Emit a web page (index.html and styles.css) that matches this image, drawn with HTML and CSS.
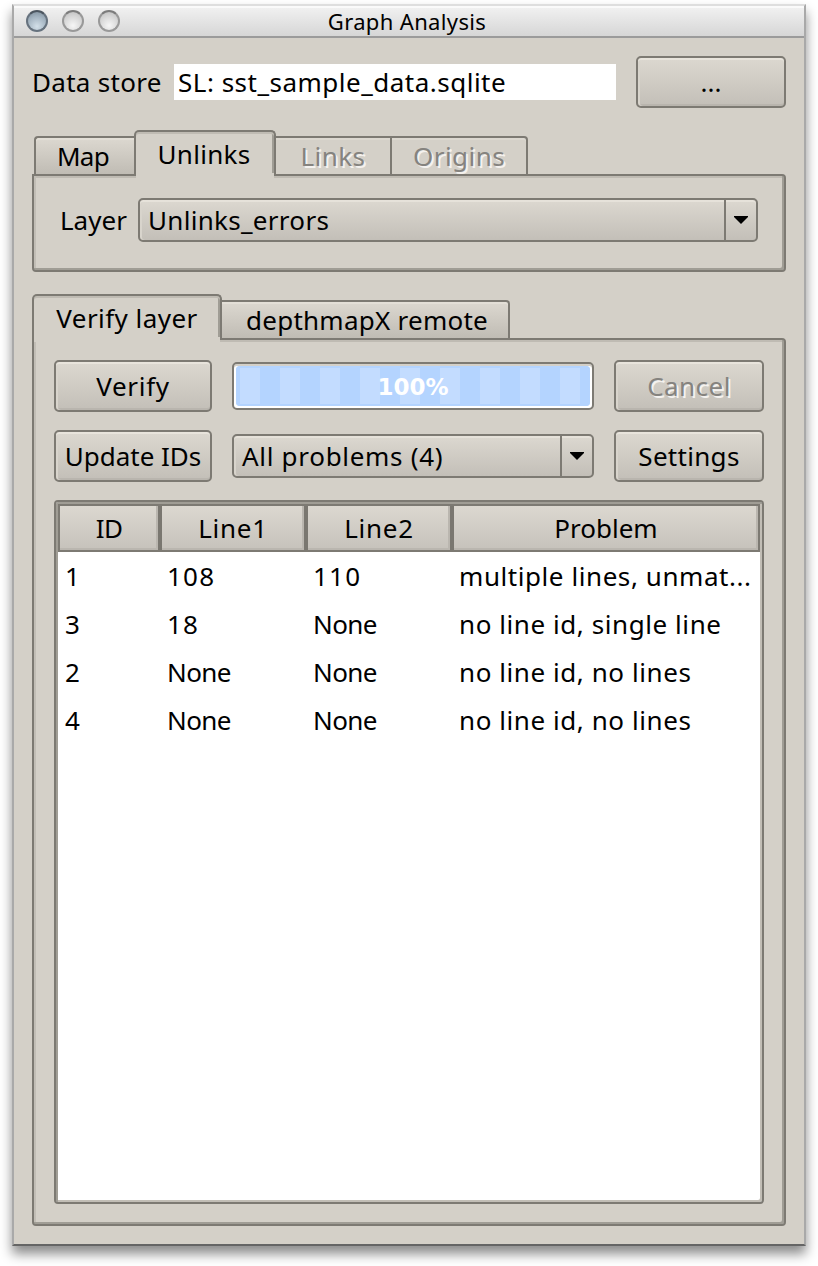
FILE: index.html
```html
<!DOCTYPE html>
<html lang="en">
<head>
<meta charset="utf-8">
<title>Graph Analysis</title>
<link rel="stylesheet" href="styles.css">
</head>
<body>
<main class="window">
  <header class="titlebar">
    <div class="lights"><i class="light light-close"></i><i class="light"></i><i class="light"></i></div>
    <h1 class="title">Graph Analysis</h1>
  </header>
  <div class="content">
    <div class="store-row">
      <label class="store-label t-store">Data store</label>
      <div class="store-field t-file">SL: sst_sample_data.sqlite</div>
      <button class="btn btn-side t-dots">...</button>
    </div>

    <nav class="tabs tabs-layers">
      <div class="tab tab-map"><span class="t-map">Map</span></div>
      <div class="tab tab-unlinks selected"><span class="t-unlinks">Unlinks</span></div>
      <div class="tab tab-links disabled"><span class="t-links">Links</span></div>
      <div class="tab tab-origins disabled last"><span class="t-origins">Origins</span></div>
    </nav>
    <section class="panel panel-layer">
      <label class="layer-label t-layer">Layer</label>
      <div class="combo combo-layer"><span class="combo-text t-errors">Unlinks_errors</span><span class="combo-arrow"><svg width="14" height="8" viewBox="0 0 14 8"><path d="M0 0H14V1L7 8L0 1Z"/></svg></span></div>
    </section>

    <nav class="tabs tabs-tools">
      <div class="tab tab-verify selected"><span class="t-vlayer">Verify layer</span></div>
      <div class="tab tab-remote last"><span class="t-remote">depthmapX remote</span></div>
    </nav>
    <section class="panel panel-tools">
      <div class="tool-grid">
        <button class="btn"><span class="t-verify">Verify</span></button>
        <div class="progress"><div class="progress-fill"><span class="t-pct">100%</span></div></div>
        <button class="btn disabled"><span class="t-cancel">Cancel</span></button>
        <button class="btn"><span class="t-update">Update IDs</span></button>
        <div class="combo"><span class="combo-text t-all">All problems (4)</span><span class="combo-arrow"><svg width="14" height="8" viewBox="0 0 14 8"><path d="M0 0H14V1L7 8L0 1Z"/></svg></span></div>
        <button class="btn"><span class="t-settings">Settings</span></button>
      </div>
      <div class="table">
        <div class="row head"><span class="t-id">ID</span><span class="t-line">Line1</span><span class="t-line">Line2</span><span class="t-problem">Problem</span></div>
        <div class="row"><span>1</span><span class="t-num">108</span><span class="t-num">110</span><span class="t-multi">multiple lines, unmat...</span></div>
        <div class="row"><span>3</span><span class="t-num">18</span><span class="t-none">None</span><span class="t-single">no line id, single line</span></div>
        <div class="row"><span>2</span><span class="t-none">None</span><span class="t-none">None</span><span class="t-nolines">no line id, no lines</span></div>
        <div class="row"><span>4</span><span class="t-none">None</span><span class="t-none">None</span><span class="t-nolines">no line id, no lines</span></div>
      </div>
    </section>
  </div>
</main>
</body>
</html>
```
FILE: styles.css
```css
* { box-sizing: border-box; }
body {
  margin: 0;
  height: 1266px;
  padding: 4px 12px 0;
  background: #fff;
  overflow: hidden;
  color: #000;
  font: 26px/32px "Noto Sans", "Open Sans", sans-serif;
}
span, label { white-space: pre; }
.window {
  width: 794px;
  height: 1242px;
  border: 2px solid #a9a9a9;
  border-top-color: #dedede;
  border-bottom-color: #656565;
  background: #d4d0c8;
  box-shadow: 0 8px 11px rgba(0, 0, 0, .45);
}
.titlebar {
  position: relative;
  display: flex;
  align-items: center;
  justify-content: center;
  height: 32px;
  border-top: 2px solid #fafafa;
  border-bottom: 2px solid #9b9b9b;
  background: linear-gradient(#f0f0f0, #d6d6d6);
}
.title { margin: -2px 0 0 -4px; font-size: 22px; font-weight: 400; line-height: 28px; letter-spacing: .35px; }
.lights { position: absolute; left: 12px; top: 2px; display: flex; gap: 14px; }
.light {
  width: 22px;
  height: 22px;
  border: 2px solid #999;
  border-top-color: #7c7c7c;
  border-radius: 50%;
  background: radial-gradient(circle at 50% 75%, #f6f6f6, #d8d8d8 55%, #bcbcbc);
}
.light-close {
  border-color: #66727e;
  border-top-color: #4c5660;
  background: radial-gradient(circle at 50% 80%, #d3e0e9, #a5b5c2 55%, #7c8c9a);
}
.content { padding: 18px 18px 0; }
.store-row { display: flex; align-items: center; height: 52px; }
.store-label { width: 142px; }
.store-field { width: 442px; height: 36px; padding-left: 4px; line-height: 36px; background: #fff; margin-right: 20px; }
.btn {
  height: 52px;
  padding: 0;
  border: 2px solid #7d7a73;
  border-radius: 5px;
  background: linear-gradient(#dcd8d0, #c3bfb8);
  box-shadow: inset 0 2px #e8e4dc, inset 2px 0 #d8d4cc, inset 0 -2px #b9b5ae;
  font: inherit;
  color: inherit;
}
.btn-side { width: 150px; }
.btn.disabled, .disabled { color: #85837f; text-shadow: 2px 2px #f4f2ef; }

.tabs { position: relative; z-index: 1; display: flex; align-items: flex-end; height: 46px; }
.tab {
  height: 40px;
  border: 2px solid #7d7a73;
  border-right: 0;
  background: linear-gradient(#dcd8d0, #c0bcb4);
  box-shadow: inset 0 2px #e3dfd7;
  text-align: center;
  line-height: 36px;
}
.tab.disabled { background: #d4d0c8; box-shadow: inset 0 2px #dcd8d0; }
.tab.last { border-right: 2px solid #7d7a73; border-top-right-radius: 4px; }
.tab.selected {
  position: relative;
  height: 46px;
  border-right: 2px solid #7d7a73;
  border-bottom: 0;
  border-radius: 5px 5px 0 0;
  background: #d4d0c8;
  box-shadow: inset 0 2px #bfbbb3, inset -2px 0 #a09d95;
  line-height: 44px;
}
.tab.selected::after {
  content: "";
  position: absolute;
  left: 0;
  right: 0;
  bottom: -2px;
  height: 5px;
  background: #d4d0c8;
}
.tabs-layers { margin-top: 22px; padding-left: 2px; }
.tab-map { width: 100px; padding-right: 4px; border-top-left-radius: 4px; }
.tab-unlinks { width: 142px; padding-right: 2px; }
.tab-links { width: 114px; border-left: 0; }
.tab-origins { width: 138px; }
.tabs-tools { margin-top: 22px; }
.tab-verify { width: 190px; }
.tab-remote { width: 288px; border-left: 0; padding-left: 4px; }

.panel {
  margin-top: -2px;
  border: 2px solid #7d7a73;
  border-radius: 0 4px 4px 4px;
  box-shadow: inset -2px -2px #a09d95, inset 2px 0 #c2beb6, inset 0 2px #bfbbb3;
}
.panel-layer { display: flex; height: 98px; padding: 22px 0 0 26px; }
.layer-label { width: 78px; line-height: 44px; }
.combo {
  display: flex;
  height: 44px;
  border: 2px solid #7d7a73;
  border-radius: 5px;
  background: linear-gradient(#dcd8d0, #c3bfb8);
  box-shadow: inset 0 2px #e6e2da, inset 2px 0 #d8d4cc;
}
.combo-layer { width: 620px; }
.combo-text { flex: 1; padding-left: 8px; line-height: 40px; }
.combo-arrow { width: 32px; border-left: 2px solid #7d7a73; padding: 16px 0 0 8px; line-height: 0; }
.combo-arrow svg { display: block; }

.panel-tools { height: 888px; padding: 20px; }
.tool-grid {
  display: grid;
  grid-template-columns: 158px 362px 150px;
  column-gap: 20px;
  row-gap: 18px;
  align-items: center;
}
.progress { height: 48px; border: 2px solid #7d7a73; border-radius: 5px; padding: 2px; background: #fff; box-shadow: inset 0 2px #d4d0c8; }
.progress-fill {
  height: 40px;
  border-radius: 4px;
  background: repeating-linear-gradient(90deg, #b4d4ff 0 4px, #c3dcff 4px 24px, #b4d4ff 24px 40px);
  box-shadow: inset 0 2px #b4d4ff, inset 0 -2px #b4d4ff;
  color: #fff;
  font: 700 23px/42px "DejaVu Sans", sans-serif;
  text-align: center;
}
.table { height: 704px; margin-top: 18px; border: 2px solid #7d7a73; border-radius: 4px; background: #fff; box-shadow: inset 2px 2px #a09d95, inset -2px -2px #c2beb6; padding: 2px 2px 2px 0; }
.row { display: grid; grid-template-columns: 104px 146px 146px 1fr; height: 48px; line-height: 48px; }
.row span { padding-left: 7px; }
.row span:first-child { padding-left: 9px; }
.head { margin-left: 2px; grid-template-columns: 102px 146px 146px 1fr; line-height: 44px; background: linear-gradient(#dcd8d0, #c6c2bb); border: 2px solid #7d7a73; }
.row.head span { padding: 0; text-align: center; border-right: 4px solid #7a7770; box-shadow: inset -2px 0 #bab6af, inset 0 -2px #bab6af; }
.row.head span:last-child { border: 0; }

/* Tracking per label */
.t-store, .t-unlinks, .t-errors, .t-settings { letter-spacing: .3px; }
.t-remote { letter-spacing: .25px; }
.t-file { letter-spacing: .5px; }
.t-map { letter-spacing: -.7px; }
.t-links, .t-origins, .t-cancel { letter-spacing: .45px; }
.t-vlayer { letter-spacing: .45px; }
.t-verify, .t-line { letter-spacing: .7px; }
.t-all { letter-spacing: .7px; }
.t-num { letter-spacing: 1.2px; }
.t-none, .t-id { letter-spacing: -.6px; }
.t-multi, .t-single, .t-nolines { letter-spacing: .57px; }
```
